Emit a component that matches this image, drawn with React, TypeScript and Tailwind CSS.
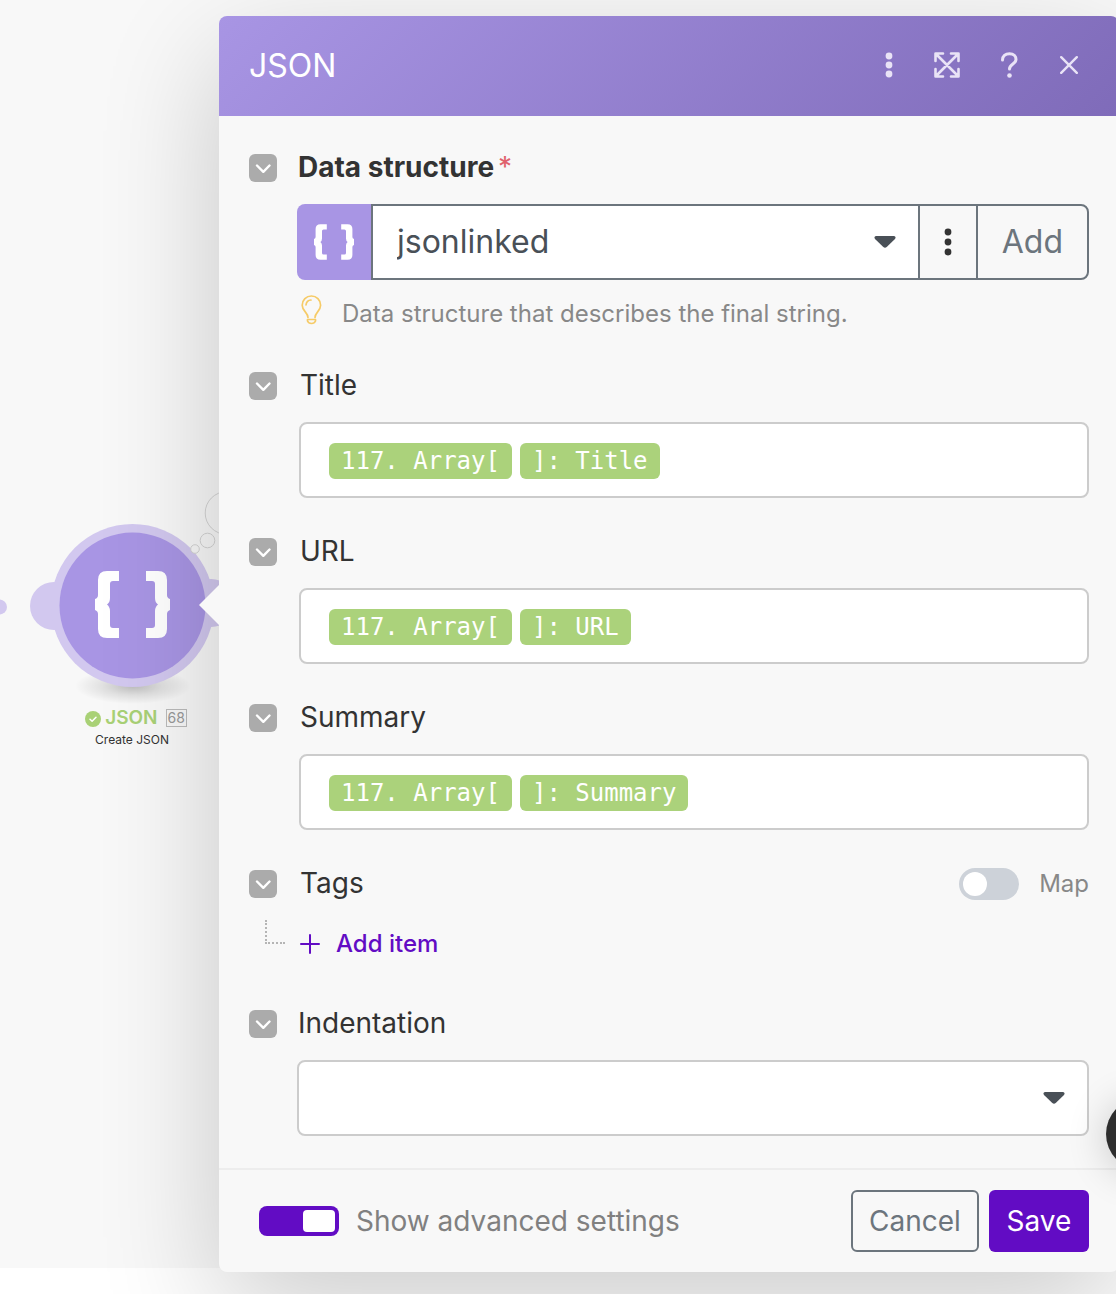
import { useState } from 'react';
import type { ReactNode } from 'react';

const BRACE =
  'M119 91h-12q-9 0-9 9v15q0 3-3 4v11q3 1 3 4v15q0 9 9 9h12v-10h-6q-3 0-3-3v-14q0-4-3-6.5q3-2 3-6.5v-14q0-3 3-3h6z';

const Braces = () => (
  <g fill="#fff">
    <path d={BRACE} />
    <path d={BRACE} transform="translate(265 0) scale(-1 1)" />
  </g>
);

const Dots = ({ className, gap = 9 }: { className?: string; gap?: number }) => (
  <svg width="8" height="30" viewBox="0 0 8 30" fill="currentColor" className={className}>
    <circle cx="4" cy={15 - gap} r="3.4" />
    <circle cx="4" cy="15" r="3.4" />
    <circle cx="4" cy={15 + gap} r="3.4" />
  </svg>
);

const Caret = () => (
  <svg
    width="22"
    height="12"
    viewBox="0 0 22 12"
    fill="#495057"
    className="pointer-events-none absolute right-[22px] top-1/2 -translate-y-1/2"
  >
    <path d="M2 0h18q1.500 0 1.500 1.500q0 1-.8 1.800l-8 7.700q-1.700 1.500-3.400 0l-8-7.700Q.5 2.500.5 1.500Q.5 0 2 0z" />
  </svg>
);

type FieldProps = {
  id: string;
  label: string;
  required?: boolean;
  inset?: boolean;
  extra?: ReactNode;
  children: ReactNode;
};

const Field = ({ id, label, required, inset, extra, children }: FieldProps) => (
  <div className="flex flex-col gap-[22px]">
    <div className="flex h-7 items-center gap-5">
      <button
        type="button"
        aria-label={`Collapse ${label}`}
        className="flex size-7 items-center justify-center rounded-md bg-[#ababab]"
      >
        <svg width="16" height="12" viewBox="0 0 16 12" fill="none" stroke="#fff" strokeWidth="2.400" strokeLinecap="round" strokeLinejoin="round">
          <path d="M2 3.500L8.300 9.800l6.200-6.300" />
        </svg>
      </button>
      <label
        htmlFor={id}
        className={`pb-0.5 text-[28px] leading-7 text-[#333] ${required ? 'font-bold' : ''} ${inset ? 'pl-[3px]' : 'pl-px'}`}
      >
        {label}
        {required && <span className="ml-1 font-normal text-[#e0626d]">*</span>}
      </label>
      {extra}
    </div>
    <div className={inset ? 'pl-[50px]' : 'pl-12'}>{children}</div>
  </div>
);

const Pill = ({ children }: { children: ReactNode }) => (
  <span className="flex h-9 items-center whitespace-pre rounded-md bg-[#abd27b] px-3 font-['DejaVu_Sans_Mono',monospace] text-2xl text-white">
    {children}
  </span>
);

const MappedField = ({ id, label }: { id: string; label: string }) => (
  <Field id={id} label={label} inset>
    <div className="flex h-[76px] items-center gap-2 rounded-lg border-2 border-[#ccc] bg-white px-7 pt-0.5">
      <Pill>117. Array[</Pill>
      <Pill>{`]: ${label}`}</Pill>
      <input id={id} type="text" className="min-w-0 flex-1 bg-transparent text-2xl outline-none" />
    </div>
  </Field>
);

const ModuleNode = () => (
  <div className="absolute left-0 top-[480px] w-[264px]">
    <svg width="264" height="224" viewBox="0 0 264 224">
      <defs>
        <radialGradient id="ground">
          <stop offset="0" stopOpacity="0.24" />
          <stop offset="0.5" stopOpacity="0.1" />
          <stop offset="1" stopOpacity="0" />
        </radialGradient>
      </defs>
      <ellipse cx="133" cy="206" rx="58" ry="18" fill="url(#ground)" />
      <circle cx="-0.5" cy="127" r="7.500" fill="#d2c8ef" />
      <circle cx="54" cy="126" r="24" fill="#d2c8ef" />
      <circle cx="211" cy="123" r="24" fill="#d2c8ef" />
      <circle cx="132.500" cy="125.500" r="81.500" fill="#d2c8ef" />
      <circle cx="132.500" cy="125.500" r="73" fill="#a895e4" />
      <Braces />
      <g fill="#f8f8f8" stroke="#d4d4d4">
        <circle cx="195" cy="69" r="4.300" />
        <circle cx="207.500" cy="60.500" r="7.300" />
        <circle cx="226.500" cy="33" r="21.300" />
      </g>
    </svg>
    <div className="flex h-7 items-center justify-center gap-1 pl-2">
      <svg width="16" height="16" viewBox="0 0 16 16" className="mt-0.5">
        <circle cx="8" cy="8" r="8" fill="#a9d176" />
        <path d="M5 8.200l2.100 2L11 6.300" fill="none" stroke="#fff" strokeWidth="1.500" strokeLinecap="round" strokeLinejoin="round" />
      </svg>
      <span className="text-[19px] leading-5 font-semibold text-[#a9d176]">JSON</span>
      <span className="ml-1 border border-[#bbb] px-px text-sm leading-4 text-[#999]">68</span>
    </div>
    <p className="text-center text-xs leading-4 text-[#333]">Create JSON</p>
  </div>
);

const headerButton = 'flex h-11 w-[60px] items-center justify-center';

export default function App() {
  const [structure, setStructure] = useState('jsonlinked');
  const [mapTags, setMapTags] = useState(false);
  const [advanced, setAdvanced] = useState(true);

  return (
    <div className="relative min-h-screen overflow-hidden bg-white font-['Inter',sans-serif]">
      <div className="flex bg-[#f8f8f8]">
        <aside className="relative w-[219px] shrink-0">
          <ModuleNode />
        </aside>

        <main className="relative z-10 -mr-[3px] -mb-1 mt-4 min-w-0 flex-1 rounded-lg bg-[#f8f8f8] shadow-[0_40px_120px_rgba(0,0,0,0.2)]">
          <svg width="21" height="42" viewBox="0 0 21 42" fill="#f8f8f8" className="absolute -left-5 top-[568px]">
            <path d="M21 0v42L0 21z" />
          </svg>

          <header className="flex h-[100px] items-center rounded-t-lg bg-linear-135 from-[#a895e4] to-[#7f6bb9] pb-0.5 pl-[30px] pr-5">
            <h1 className="flex-1 pt-0.5 text-[32px] text-white">JSON</h1>
            <div className="flex text-[#e9e3f6]">
              <button type="button" aria-label="More options" className={headerButton}>
                <Dots />
              </button>
              <button type="button" aria-label="Expand" className={headerButton}>
                <svg width="30" height="26" viewBox="0 0 30 26" fill="none" stroke="currentColor" strokeWidth="2.600" strokeLinecap="round" strokeLinejoin="round">
                  <path d="M2 2l22 22M24 2L2 24M9 1.500H1.500V9M17 1.500h7.500V9M9 24.500H1.500V17M17 24.500h7.500V17" />
                </svg>
              </button>
              <button type="button" aria-label="Help" className={headerButton}>
                <svg width="18" height="26" viewBox="0 0 18 26" fill="none" stroke="currentColor" strokeWidth="3" strokeLinecap="round" strokeLinejoin="round">
                  <path d="M2.500 8C2.500 4 5.300 1.800 9.500 1.800S16 4.200 16 7.500C16 12 9.500 12 9.500 17" />
                  <circle cx="9.500" cy="23.500" r="2.300" fill="currentColor" stroke="none" />
                </svg>
              </button>
              <button type="button" aria-label="Close" className={headerButton}>
                <svg width="18" height="18" viewBox="0 0 18 18" fill="none" stroke="currentColor" strokeWidth="2.400" strokeLinecap="round">
                  <path d="M1.200 1.200l15.600 15.600M16.800 1.200L1.200 16.800" />
                </svg>
              </button>
            </div>
          </header>

          <form className="flex flex-col gap-10 px-[30px] pb-8 pt-[38px]">
            <Field id="structure" label="Data structure" required>
              <div className="flex h-[76px]">
                <div className="flex w-[74px] items-center justify-center rounded-l-lg bg-[#a895e4]">
                  <svg width="40" height="36" viewBox="95 91 75 67">
                    <Braces />
                  </svg>
                </div>
                <div className="relative flex-1 border-y-2 border-l-2 border-[#6c757d] bg-white">
                  <select
                    id="structure"
                    value={structure}
                    onChange={(e) => setStructure(e.target.value)}
                    className="h-full w-full appearance-none pl-6 text-[32px] text-[#495057] outline-none"
                  >
                    <option>jsonlinked</option>
                  </select>
                  <Caret />
                </div>
                <button
                  type="button"
                  aria-label="Structure options"
                  className="flex w-[58px] items-center justify-center border-y-2 border-l-2 border-[#6c757d] text-[#333]"
                >
                  <Dots gap={10} />
                </button>
                <button type="button" className="rounded-r-lg border-2 border-[#6c757d] px-6 text-[32px] text-[#6c757d]">
                  Add
                </button>
              </div>
              <div className="flex h-[52px] items-center gap-5 pl-1 pt-4">
                <svg width="21" height="30" viewBox="0 0 21 30" fill="none" stroke="#f6cb67" strokeWidth="1.700" strokeLinecap="round" strokeLinejoin="round" className="mb-2">
                  <path d="M7 22.500C7 17.500 1.200 16 1.200 10.200a9.200 9.200 0 0 1 18.400 0C19.600 16 14 17.500 14 22.500" />
                  <path d="M5 9.800A5.500 5.500 0 0 1 10 5M6.500 24.500h8v1.500q-1 2.500-4 2.500t-4-2.500z" />
                </svg>
                <p className="text-2xl text-[#888]">Data structure that describes the final string.</p>
              </div>
            </Field>

            <MappedField id="title" label="Title" />
            <MappedField id="url" label="URL" />
            <MappedField id="summary" label="Summary" />

            <Field
              id="tags"
              label="Tags"
              inset
              extra={
                <label className="ml-auto flex items-center gap-5 text-2xl text-[#888]">
                  <input
                    type="checkbox"
                    checked={mapTags}
                    onChange={() => setMapTags(!mapTags)}
                    className="h-8 w-[60px] appearance-none rounded-full bg-[#cdd2d9] p-1 before:block before:size-6 before:rounded-full before:bg-white checked:bg-[#620cc4] checked:before:ml-auto"
                  />
                  Map
                </label>
              }
            >
              <div className="-ml-[34px] flex h-[50px] items-start gap-[15px]">
                <span className="h-6 w-5 border-b-2 border-l-2 border-dotted border-[#b5b5b5]" />
                <button id="tags" type="button" className="flex h-12 items-center gap-4 text-2xl font-medium text-[#620cc4]">
                  <svg width="20" height="20" viewBox="0 0 20 20" stroke="currentColor" strokeWidth="2" strokeLinecap="round">
                    <path d="M10 1v18M1 10h18" />
                  </svg>
                  Add item
                </button>
              </div>
            </Field>

            <Field id="indentation" label="Indentation">
              <div className="relative h-[76px] rounded-lg border-2 border-[#ccc] bg-white">
                <select id="indentation" className="h-full w-full appearance-none pl-6 text-[32px] text-[#495057] outline-none">
                  <option value="" />
                </select>
                <Caret />
              </div>
            </Field>
          </form>

          <footer className="flex items-center gap-2.5 border-t-2 border-[#ededed] py-5 pl-10 pr-[30px] text-[28px]">
            <label className="flex flex-1 items-center gap-[17px] text-[#808080]">
              <input
                type="checkbox"
                checked={advanced}
                onChange={() => setAdvanced(!advanced)}
                className="h-[30px] w-20 appearance-none rounded-lg bg-[#ababab] p-1 before:block before:h-[22px] before:w-8 before:rounded-sm before:bg-white checked:bg-[#620cc4] checked:before:ml-auto"
              />
              Show advanced settings
            </label>
            <button type="button" className="h-[62px] w-32 rounded-md border-2 border-[#6c757d] text-[#6c757d]">
              Cancel
            </button>
            <button type="submit" className="h-[62px] w-[100px] rounded-md bg-[#620cc4] text-white">
              Save
            </button>
          </footer>
        </main>
      </div>

      <button
        type="button"
        aria-label="Open chat"
        className="absolute -right-[62px] bottom-[124px] z-20 size-[72px] rounded-full bg-[#2d2d2d] shadow-[0_4px_40px_rgba(0,0,0,0.2)]"
      />
    </div>
  );
}
